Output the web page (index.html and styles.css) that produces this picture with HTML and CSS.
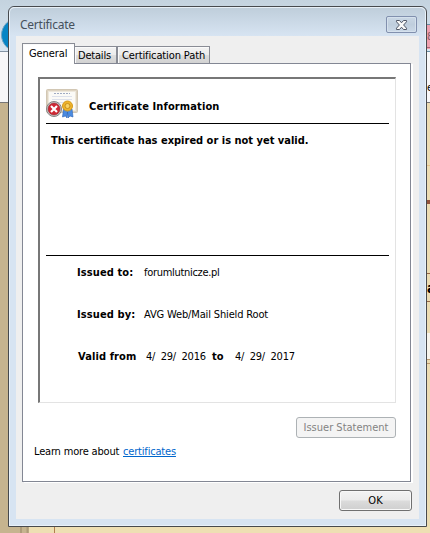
FILE: index.html
```html
<!DOCTYPE html>
<html lang="en">
<head>
<meta charset="utf-8">
<title>Certificate</title>
<link rel="stylesheet" href="styles.css">
</head>
<body>
<svg class="backdrop" width="430" height="533" viewBox="0 0 430 533" aria-hidden="true">
  <defs><linearGradient id="sky" x2="0" y2="1"><stop stop-color="#c4d3df"/><stop offset="1" stop-color="#dae6f1"/></linearGradient></defs>
  <rect width="430" height="52" fill="url(#sky)"/>
  <circle cx="18" cy="35" r="16.5" fill="#0785c5" stroke="#72a5c4"/>
  <rect y="51" width="8" height="1" fill="#8393a3"/>
  <rect y="52" width="430" height="50" fill="#f7f7f8"/>
  <rect y="102" width="430" height="1" fill="#777"/>
  <rect y="103" width="30" height="430" fill="#c6b48f"/>
  <rect x="427" y="24" width="3" height="25" fill="#f0a0b0"/>
  <path d="M427 24.5h3M427 51.5h3" stroke="#688ea5"/>
  <path d="M427 47.5h3" stroke="#a96877"/>
  <rect x="427" y="103" width="3" height="430" fill="#ecdcb2"/>
  <path d="M427 165.5h3" stroke="#e6c28b"/>
  <rect x="427" y="200" width="3" height="4" fill="#93553d"/>
  <path d="M427 273.5h3M427 301.5h3" stroke="#976848"/>
  <rect x="427" y="333" width="3" height="27" fill="#f7f4eb"/>
  <path d="M427 359.5h3M427 363.5h3" stroke="#bd9b70"/>
  <rect x="29" y="526" width="401" height="7" fill="#eedfb3"/>
  <path d="M21 527v6M27.5 527v6" stroke="#ad9b79" stroke-width="2"/>
  <path d="M54.5 527v6" stroke="#b17d4d"/>
</svg>
<span class="edge edge-tab">8</span>
<span class="edge edge-menu">e</span>
<span class="edge edge-page">a</span>
<main class="dialog">
  <header class="titlebar">
    <span class="title">Certificate</span>
    <button class="close" aria-label="Close"><svg width="13" height="10" viewBox="0 0 13 10"><path d="M1.5.5h3l2 2.3 2-2.3h3v1.3L8.600 5l2.900 3.200v1.300h-3l-2-2.300-2 2.300h-3V8.200L4.400 5 1.500 1.800z" fill="#fafafa" stroke="#505766"/></svg></button>
  </header>
  <div class="client">
    <nav class="tabs">
      <span class="tab active"><span class="t-general">General</span></span>
      <span class="tab details"><span class="t-details">Details</span></span>
      <span class="tab path"><span class="t-path">Certification Path</span></span>
    </nav>
    <section class="panel">
      <div class="info">
        <div class="heading">
          <svg class="cert" width="32" height="31" viewBox="0 0 32 31">
            <rect x=".5" y=".5" width="31" height="23" rx="1" fill="#ded4c2" stroke="#d2c7b4"/>
            <rect x="2.500" y="2.500" width="27" height="19" fill="#fbfaf6" stroke="#eee8dc"/>
            <path d="M8 4.500h16" stroke="#a0abc2" stroke-dasharray="2 1"/>
            <path d="M6 7.500h20M6 10.500h20M11 13.500h14" stroke="#dde1eb"/>
            <path d="M17.500 20l-1 8 3-1 1.500 2 .500-6 .500 6 2-2 3 1-1-8z" fill="#4b8be0" stroke="#2861b4" stroke-width=".6"/>
            <circle cx="21.500" cy="17" r="5" fill="#efb42b" stroke="#d59a1c"/>
            <circle cx="21.500" cy="17" r="2.500" fill="#f8d265" stroke="#bd8515" stroke-width=".8"/>
            <circle cx="8" cy="20" r="7.500" fill="#d0d0d0" stroke="#858585"/>
            <circle cx="8" cy="20" r="6" fill="#cf2733" stroke="#8e3038" stroke-width=".6"/>
            <path d="M5 17l6 6m0-6l-6 6" stroke="#fff" stroke-width="2.200"/>
          </svg>
          <b class="t-info">Certificate Information</b>
        </div>
        <div class="message"><b class="t-message">This certificate has expired or is not yet valid.</b></div>
        <dl class="facts">
          <dt class="t-to">Issued to:</dt><dd class="t-domain">forumlutnicze.pl</dd>
          <dt class="t-by">Issued by:</dt><dd class="t-root">AVG Web/Mail Shield Root</dd>
          <dt class="t-valid">Valid from</dt><dd class="dates"><span>4/ 29/ 2016</span><b>to</b><span>4/ 29/ 2017</span></dd>
        </dl>
      </div>
      <button class="issuer" disabled><span class="t-issuer">Issuer Statement</span></button>
      <p class="learn"><span class="t-learn">Learn more about</span><a href="#">certificates</a></p>
    </section>
    <button class="ok">OK</button>
  </div>
</main>
</body>
</html>
```
FILE: styles.css
```css
* { box-sizing: border-box; }
body { margin: 0; width: 430px; height: 533px; overflow: hidden; position: relative; font: 11px/14px "DejaVu Sans Condensed", "DejaVu Sans", sans-serif; font-stretch: condensed; color: #000; white-space: nowrap; }
button { font: inherit; padding: 0; margin: 0; }
.backdrop { display: block; }
.edge { position: absolute; left: 427px; width: 3px; height: 14px; overflow: hidden; }
.edge-tab { top: 30px; color: #85606b; }
.edge-menu { top: 81px; }
.edge-page { top: 281px; font-weight: bold; font-size: 14px; }
.dialog { position: absolute; left: 8px; top: 6px; width: 419px; height: 521px; border: 1px solid #474a4e; border-radius: 6px 6px 0 0; background: #d7e4f2; box-shadow: inset 0 0 0 1px #e9f2fa; padding: 0 7px 7px; display: flex; flex-direction: column; }
.titlebar { height: 29px; flex: none; display: flex; justify-content: space-between; margin: 0 -6px; padding: 0 8px 0 10px; background: linear-gradient(#bfcedb, #d7e4f2); border-top: 1px solid #e7eff6; border-radius: 5px 5px 0 0; }
.title { font: 12px/16px "Noto Sans", sans-serif; color: #46515c; padding-top: 9px; letter-spacing: -.25px; }
.close { width: 31px; height: 17px; margin: 8px 0 0; border: 1px solid #8190ae; border-radius: 2px; background: linear-gradient(#cad7e5, #bfcedd 50%, #cbd9e8); box-shadow: inset 0 0 0 1px #d5e1ed; display: flex; align-items: center; justify-content: center; }
.client { flex: 1; background: #efefef; display: flex; flex-direction: column; padding: 7px 5px 0 6px; }
.tabs { height: 21px; flex: none; display: flex; align-items: flex-end; margin-bottom: -1px; }
.tab { border: 1px solid #898c95; height: 18px; padding: 2px 0 0 3px; background: linear-gradient(#f2f2f2, #ececec 50%, #dedede 51%, #d2d2d2); box-shadow: inset 1px 1px #fafafa; }
.active { width: 53px; height: 21px; padding: 3px 0 0 6px; background: #fff; border-bottom: 0; z-index: 1; letter-spacing: -.1px; }
.details { width: 42px; border-left: 0; letter-spacing: -.2px; }
.path { width: 93px; padding-left: 4px; letter-spacing: -.12px; }
.panel { height: 419px; width: 389px; flex: none; border: 1px solid #838794; background: #fff; box-shadow: 2px 1px #fff; padding: 13px 14px 0 15px; display: flex; flex-direction: column; }
.info { height: 326px; width: 358px; border: 1px solid #e3e3e3; border-left: 2px solid #777; border-top: 2px solid #777; padding: 10px 6px 0 6px; flex: none; }
.heading { height: 35px; border-bottom: 1px solid #000; display: flex; gap: 11px; }
.heading b { padding-top: 11px; letter-spacing: .12px; }
.cert { flex: none; }
.message { height: 132px; border-bottom: 1px solid #000; padding: 10px 0 0 5px; }
.facts { margin: 10px 0 0 31px; display: grid; grid-template-columns: 67px 1fr; grid-auto-rows: 42px; }
.facts dt { font-weight: bold; letter-spacing: .1px; }
.facts dd { margin: 0; }
.t-domain { letter-spacing: -.3px; }
.t-root { letter-spacing: -.15px; }
.dates { display: flex; padding-left: 2px; word-spacing: 2.500px; }
.dates span { width: 66px; }
.dates b { width: 23px; }
.t-valid { padding-left: 1px; }
.dates span { letter-spacing: -.2px; }
.issuer { align-self: flex-end; width: 100px; height: 21px; margin-top: 14px; padding-top: 1px; flex: none; border: 1px solid #adb2b5; border-radius: 3px; color: #838383; background: #f4f4f4; }
.learn { margin: 7px 0 0 -4px; display: flex; }
.t-learn { width: 89px; letter-spacing: -.18px; }
.learn a { color: #0066cc; letter-spacing: -.18px; }
.ok { align-self: flex-end; width: 73px; height: 21px; margin: 8px 2px 0 0; padding-top: 1px; border: 1px solid #707070; border-radius: 3px; background: linear-gradient(#f3f3f3, #ebebeb 49%, #dcdcdc 51%, #cfcfcf); box-shadow: inset 0 0 0 1px #f8f8f8; }
```
